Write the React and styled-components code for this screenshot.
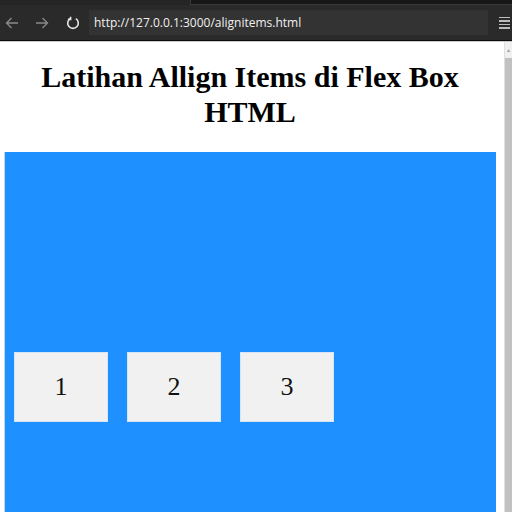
import React from "react";
import styled, { createGlobalStyle } from "styled-components";

const Global = createGlobalStyle`
  html, body { margin: 0; padding: 0; background: #fff; overflow: hidden; }
  body { width: 512px; height: 512px; }
`;

const Window = styled.div`
  width: 512px;
  height: 512px;
  display: flex;
  flex-direction: column;
  overflow: hidden;
`;

const TabStrip = styled.div`
  height: 5px;
  display: flex;
  background: #252525;
`;

const TabFill = styled.div`
  margin-left: 190px;
  flex: 1;
  background: #161616;
  border-left: 1px solid #3a3a3a;
  border-bottom: 1px solid #3a3a3a;
`;

const Toolbar = styled.div`
  height: 36px;
  display: flex;
  align-items: center;
  background: #2a2a2a;
  border-bottom: 1px solid #0c0c0c;
  padding: 0 2px 0 0;
  box-sizing: border-box;
`;

const NavButton = styled.div`
  width: ${(p) => p.$w}px;
  height: 26px;
  display: flex;
  align-items: center;
  justify-content: flex-start;
  padding-left: 5px;
  box-sizing: border-box;
  color: ${(p) => p.$color};
`;

const Address = styled.div`
  flex: 1;
  height: 25px;
  background: #333333;
  display: flex;
  align-items: center;
  padding-left: 5px;
  font-family: "Open Sans", "DejaVu Sans", sans-serif;
  font-size: 12px;
  font-weight: 500;
  color: #f0f0f0;
`;

const Menu = styled.div`
  width: 22px;
  display: flex;
  flex-direction: column;
  align-items: flex-end;
  gap: 2px;
`;

const MenuLine = styled.div`
  width: 11px;
  height: 1.5px;
  background: #bdbdbd;
`;

const Viewport = styled.div`
  flex: 1;
  display: flex;
  border-top: 1px solid #c9c9c9;
  min-height: 0;
`;

const Page = styled.div`
  flex: 1;
  background: #fff;
  padding: 0 8px 0 4px;
  overflow: hidden;
`;

const Scrollbar = styled.div`
  width: 7px;
  display: flex;
  flex-direction: column;
  background: #f0f0f0;
  border-left: 1px solid #e0e0e0;
`;

const ScrollArrow = styled.div`
  height: 16px;
  display: flex;
  align-items: center;
  justify-content: center;
  color: #a0a0a0;
  font-size: 5px;
`;

const ScrollThumb = styled.div`
  flex: 1;
  background: #c1c1c1;
`;

const Title = styled.h1`
  margin: 17px 0 23px;
  font-family: "Liberation Serif", "Times New Roman", serif;
  font-weight: bold;
  font-size: 30px;
  line-height: 35px;
  text-align: center;
  color: #000;
`;

const FlexBox = styled.div`
  height: 470px;
  background: #1e90ff;
  border-left: 1px solid #b9d7f5;
  display: flex;
  align-items: center;
  padding-left: 9px;
  gap: 19px;
`;

const Item = styled.div`
  width: 94px;
  height: 70px;
  box-sizing: border-box;
  background: #f1f1f1;
  border: 1px solid #d6e6f6;
  display: flex;
  align-items: center;
  justify-content: center;
  font-family: "Liberation Serif", "Times New Roman", serif;
  font-size: 26px;
  color: #111;
`;

const Arrow = ({ dir }) => (
  <svg width="14" height="12" viewBox="0 0 14 12" fill="none" stroke="currentColor" strokeWidth="1.3">
    {dir === "left" ? (
      <path d="M13 6H1.5M6.5 1L1.5 6l5 5" />
    ) : (
      <path d="M1 6h11.5M7.5 1l5 5-5 5" />
    )}
  </svg>
);

const Reload = () => (
  <svg width="14" height="14" viewBox="0 0 14 14" fill="none" stroke="currentColor" strokeWidth="1.6">
    <path d="M4.2 2.6A5.3 5.3 0 1 0 9.8 2.6" />
    <path d="M4.6 0.8v2.6H2" />
  </svg>
);

export default function App() {
  return (
    <>
      <Global />
      <Window>
        <TabStrip>
          <TabFill />
        </TabStrip>
        <Toolbar>
          <NavButton $w={30} $color="#8a8a8a">
            <Arrow dir="left" />
          </NavButton>
          <NavButton $w={31} $color="#8a8a8a">
            <Arrow dir="right" />
          </NavButton>
          <NavButton $w={28} $color="#e6e6e6">
            <Reload />
          </NavButton>
          <Address>http://127.0.0.1:3000/alignitems.html</Address>
          <Menu>
            <MenuLine />
            <MenuLine />
            <MenuLine />
            <MenuLine />
          </Menu>
        </Toolbar>
        <Viewport>
          <Page>
            <Title>
              Latihan Allign Items di Flex Box
              <br />
              HTML
            </Title>
            <FlexBox>
              <Item>1</Item>
              <Item>2</Item>
              <Item>3</Item>
            </FlexBox>
          </Page>
          <Scrollbar>
            <ScrollArrow>▲</ScrollArrow>
            <ScrollThumb />
          </Scrollbar>
        </Viewport>
      </Window>
    </>
  );
}
